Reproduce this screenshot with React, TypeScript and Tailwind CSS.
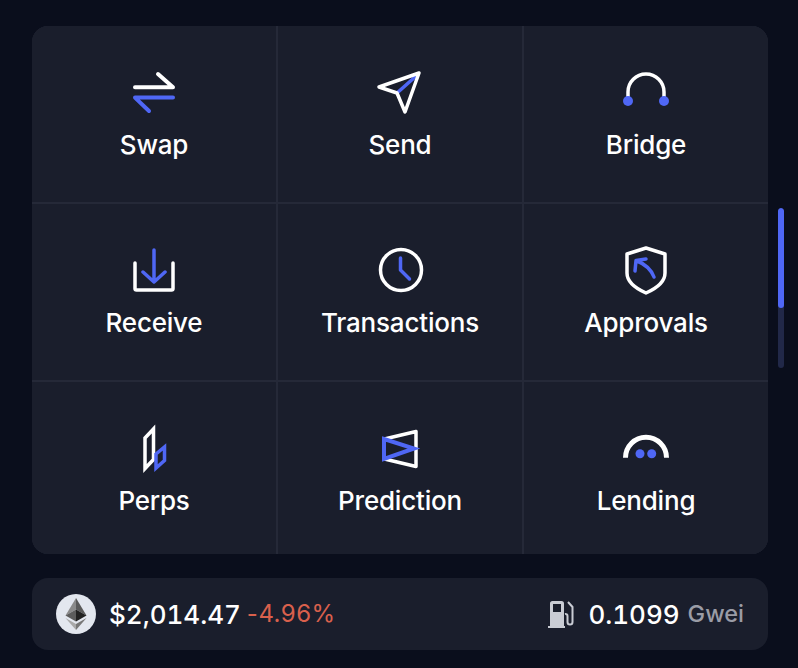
const white = "#ffffff";
const blue = "#4f67f5";

function Icon({ children }: { children: React.ReactNode }) {
  return (
    <svg width="48" height="48" viewBox="0 0 48 48" fill="none" strokeWidth="3.5" strokeLinecap="round" strokeLinejoin="round" className="overflow-visible">
      {children}
    </svg>
  );
}

const tiles = [
  {
    label: "Swap",
    icon: (
      <>
        <path d="M5 19.3H43L28 6" stroke={white} strokeWidth="4" />
        <path d="M43 29.6H5L19 43" stroke={blue} strokeWidth="4" />
      </>
    ),
  },
  {
    label: "Send",
    icon: (
      <>
        <path d="M21 25L39 9" stroke={blue} />
        <path d="M43 5L3 19L21 25L29 44Z" stroke={white} />
      </>
    ),
  },
  {
    label: "Bridge",
    icon: (
      <>
        <path d="M6 30V24a18 18 0 0 1 36 0V30" stroke={white} />
        <circle cx="6" cy="33" r="5" fill={blue} />
        <circle cx="42" cy="33" r="5" fill={blue} />
      </>
    ),
  },
  {
    label: "Receive",
    icon: (
      <>
        <path d="M5 17V42.5a1.5 1.5 0 0 0 1.5 1.5H41.5a1.5 1.5 0 0 0 1.5 -1.5V17" stroke={white} />
        <path d="M24 4V36M13 26L24 36L35 26" stroke={blue} />
      </>
    ),
  },
  {
    label: "Transactions",
    icon: (
      <>
        <circle cx="25" cy="24" r="20.5" stroke={white} />
        <path d="M24.5 12V24L33.5 33" stroke={blue} />
      </>
    ),
  },
  {
    label: "Approvals",
    icon: (
      <>
        <path d="M24 2L5 8V27C5 37 15 43 24 47C33 43 43 37 43 27V8Z" stroke={white} />
        <path d="M24 13L14 14.5L13 25M14 14.5C23 18 29 23 32 31" stroke={blue} />
      </>
    ),
  },
  {
    label: "Perps",
    icon: (
      <>
        <path d="M15 14L23.5 5V35.5L15 44.5Z" stroke={white} strokeLinejoin="miter" />
        <path d="M26 30L34.5 23V36.5L26 44Z" stroke={blue} strokeLinejoin="miter" />
      </>
    ),
  },
  {
    label: "Prediction",
    icon: (
      <>
        <path d="M8.5 15L40 7.5V42.5L8.5 35" stroke={white} />
        <path d="M8 15L38 24.5L8 35Z" stroke={blue} strokeWidth="4" strokeLinejoin="miter" />
      </>
    ),
  },
  {
    label: "Lending",
    icon: (
      <>
        <path d="M3.5 33.7A20.5 20.5 0 0 1 44.5 33.7" stroke={white} strokeWidth="5" strokeLinecap="butt" />
        <circle cx="18" cy="29.7" r="4.5" fill={blue} />
        <circle cx="29.7" cy="29.7" r="4.5" fill={blue} />
      </>
    ),
  },
];

function EthLogo() {
  return (
    <svg width="40" height="40" viewBox="0 0 40 40" className="shrink-0">
      <circle cx="20" cy="20" r="20" fill="#e3e7ef" />
      <path d="M20 4L9.5 21.5L20 15.5Z" fill="#8a8a8a" />
      <path d="M20 4L30.5 21.5L20 15.5Z" fill="#5a5a5a" />
      <path d="M9.5 21.5L20 15.5V27.5Z" fill="#5c5c5c" />
      <path d="M30.5 21.5L20 15.5V27.5Z" fill="#222222" />
      <path d="M9.5 24L20 30V36Z" fill="#a9a9a9" />
      <path d="M30.5 24L20 30V36Z" fill="#777777" />
    </svg>
  );
}

function GasPump() {
  return (
    <svg width="27" height="27" viewBox="0 0 27 27" className="shrink-0">
      <path
        fillRule="evenodd"
        fill="#c9ccd4"
        d="M2 2.5A2.5 2.5 0 0 1 4.5 0H13.5A2.5 2.5 0 0 1 16 2.5V25H17V27H0V25H2ZM5 3V11H13V3Z"
      />
      <path d="M20 1L24.5 6V21A2.3 2.3 0 0 1 19.5 21V15A2 2 0 0 0 17 13" fill="none" stroke="#c9ccd4" strokeWidth="2" />
    </svg>
  );
}

export default function App() {
  return (
    <div className="flex min-h-screen bg-[#0a0e1c] pl-8 pt-[26px] font-['Inter',sans-serif] text-white">
      <div className="w-[736px]">
        <div className="grid grid-cols-3 grid-rows-[176px_176px_172px] gap-[2px] overflow-hidden rounded-2xl bg-[#252938]">
          {tiles.map((tile) => (
            <div key={tile.label} className="flex flex-col items-center bg-[#1a1e2c] pt-[42px]">
              <Icon>{tile.icon}</Icon>
              <span className="mt-[13px] text-[26px] leading-8 font-medium tracking-[-0.2px]">{tile.label}</span>
            </div>
          ))}
        </div>

        <div className="mt-6 flex h-[72px] items-center justify-between rounded-2xl bg-[#1a1e2c] pr-6 pl-6">
          <div className="flex items-center">
            <EthLogo />
            <span className="ml-[13px] text-[26px] font-medium tabular-nums">$2,014.47</span>
            <span className="ml-[6px] text-2xl tracking-[0.5px] text-[#d9604c]">-4.96%</span>
          </div>
          <div className="flex items-center">
            <GasPump />
            <span className="ml-[13px] text-[26px] font-medium tabular-nums">0.1099</span>
            <span className="ml-[8px] text-[23.5px] font-medium text-[#9a9ca6]">Gwei</span>
          </div>
        </div>
      </div>

      <div className="mt-[182px] ml-[10px] flex h-40 w-[6px] flex-col overflow-hidden rounded-full bg-[#212848]">
        <div className="h-[100px] rounded-full bg-[#4f67f5]" />
      </div>
    </div>
  );
}
